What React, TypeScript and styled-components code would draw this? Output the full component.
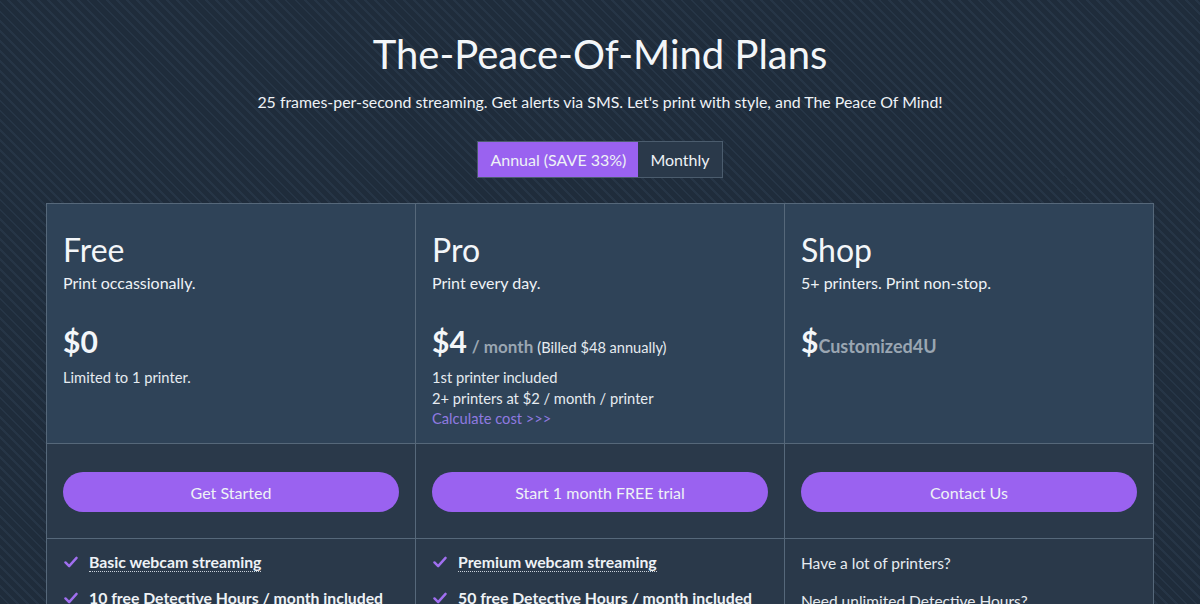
import React from "react";
import styled, { createGlobalStyle } from "styled-components";

const Global = createGlobalStyle`
  html, body { margin: 0; padding: 0; }
  body {
    font-family: Lato, "Open Sans", sans-serif;
    color: #eef2f6;
    background-color: #1f2c3b;
    background-image: repeating-linear-gradient(
      45deg,
      #1f2c3b 0px,
      #1f2c3b 5px,
      #263546 5px,
      #263546 7px
    );
    height: 604px;
    overflow: hidden;
  }
`;

const Page = styled.div`
  display: flex;
  flex-direction: column;
  align-items: center;
  padding-top: 28px;
`;

const Title = styled.h1`
  margin: 0;
  font-size: 40px;
  font-weight: 400;
  line-height: 52px;
  color: #f3f6f9;
`;

const Subtitle = styled.p`
  margin: 12px 0 0;
  font-size: 15.9px;
  line-height: 20px;
  color: #eef2f6;
`;

const Toggle = styled.div`
  display: flex;
  margin-top: 29px;
  border: 1px solid #4b5c6d;
`;

const ToggleBtn = styled.div<{ $active?: boolean }>`
  height: 35px;
  display: flex;
  align-items: center;
  padding: 0 12px;
  font-size: 16px;
  color: #eef2f6;
  background: ${(p) => (p.$active ? "#9a62f0" : "#2a394a")};
`;

const Table = styled.div`
  margin-top: 25px;
  width: 1107px;
  border-top: 1px solid #56687a;
  border-left: 1px solid #56687a;
`;

const Row = styled.div<{ $bg: string; $h?: number }>`
  display: grid;
  grid-template-columns: repeat(3, 1fr);
  background: ${(p) => p.$bg};
  ${(p) => (p.$h ? `height: ${p.$h}px;` : "")}
`;

const Cell = styled.div<{ $pt?: number }>`
  border-right: 1px solid #56687a;
  border-bottom: 1px solid #56687a;
  padding: ${(p) => p.$pt ?? 0}px 16px 0 16px;
  box-sizing: border-box;
  display: flex;
  flex-direction: column;
`;

const PlanName = styled.div`
  font-size: 32px;
  line-height: 38px;
  font-weight: 400;
  color: #f3f6f9;
`;

const Tagline = styled.div`
  margin-top: 4px;
  font-size: 16px;
  line-height: 20px;
  color: #eef2f6;
`;

const PriceLine = styled.div`
  margin-top: 30px;
  display: flex;
  align-items: baseline;
  height: 36px;
`;

const Amount = styled.span`
  font-size: 30px;
  font-weight: 700;
  color: #f3f6f9;
`;

const Per = styled.span`
  font-size: 17px;
  font-weight: 700;
  color: #9aa6b2;
  margin-left: 5px;
`;

const Billed = styled.span`
  font-size: 14.6px;
  color: #e6ebf0;
  margin-left: 4px;
`;

const Custom = styled.span`
  font-size: 18px;
  font-weight: 700;
  color: #9aa6b2;
`;

const Notes = styled.div`
  margin-top: 8px;
  font-size: 14.7px;
  line-height: 20.5px;
  color: #e6ebf0;
`;

const CalcLink = styled.a`
  color: #8f7ae0;
  text-decoration: none;
  display: block;
`;

const Button = styled.button`
  height: 40px;
  width: 100%;
  border: none;
  border-radius: 20px;
  background: #9a62f0;
  color: #eef2f6;
  font-family: Lato, sans-serif;
  font-size: 16px;
  cursor: pointer;
`;

const FeatureList = styled.ul`
  list-style: none;
  margin: 0;
  padding: 0;
`;

const Feature = styled.li`
  display: flex;
  align-items: center;
  gap: 11px;
  height: 36px;
  padding-left: 1px;
`;

const FeatureText = styled.span`
  font-size: 15.8px;
  font-weight: 700;
  color: #eef2f6;
  border-bottom: 1px dotted #c9d1da;
  line-height: 18px;
`;

const Plain = styled.div`
  font-size: 15.5px;
  color: #e6ebf0;
  height: 38px;
  display: flex;
  align-items: center;
`;

const Check = () => (
  <svg width="14" height="12" viewBox="0 0 15 13">
    <path d="M1.5 7 L5.5 11 L13.5 2" fill="none" stroke="#a06ff0" strokeWidth="2.6" strokeLinecap="round" strokeLinejoin="round" />
  </svg>
);

export default function App() {
  return (
    <>
      <Global />
      <Page>
        <Title>The-Peace-Of-Mind Plans</Title>
        <Subtitle>25 frames-per-second streaming. Get alerts via SMS. Let's print with style, and The Peace Of Mind!</Subtitle>
        <Toggle>
          <ToggleBtn $active>Annual (SAVE 33%)</ToggleBtn>
          <ToggleBtn>Monthly</ToggleBtn>
        </Toggle>
        <Table>
          <Row $bg="#2f4358" $h={240}>
            <Cell $pt={27}>
              <PlanName>Free</PlanName>
              <Tagline>Print occassionally.</Tagline>
              <PriceLine>
                <Amount>$0</Amount>
              </PriceLine>
              <Notes>Limited to 1 printer.</Notes>
            </Cell>
            <Cell $pt={27}>
              <PlanName>Pro</PlanName>
              <Tagline>Print every day.</Tagline>
              <PriceLine>
                <Amount>$4</Amount>
                <Per>/ month</Per>
                <Billed>(Billed $48 annually)</Billed>
              </PriceLine>
              <Notes>
                1st printer included
                <br />
                2+ printers at $2 / month / printer
                <CalcLink href="#">Calculate cost &gt;&gt;&gt;</CalcLink>
              </Notes>
            </Cell>
            <Cell $pt={27}>
              <PlanName>Shop</PlanName>
              <Tagline>5+ printers. Print non-stop.</Tagline>
              <PriceLine>
                <Amount>$</Amount>
                <Custom>Customized4U</Custom>
              </PriceLine>
            </Cell>
          </Row>
          <Row $bg="#2a394a" $h={95}>
            <Cell $pt={28}>
              <Button>Get Started</Button>
            </Cell>
            <Cell $pt={28}>
              <Button>Start 1 month FREE trial</Button>
            </Cell>
            <Cell $pt={28}>
              <Button>Contact Us</Button>
            </Cell>
          </Row>
          <Row $bg="#2a394a" $h={120}>
            <Cell $pt={5}>
              <FeatureList>
                <Feature><Check /><FeatureText>Basic webcam streaming</FeatureText></Feature>
                <Feature><Check /><FeatureText>10 free Detective Hours / month included</FeatureText></Feature>
              </FeatureList>
            </Cell>
            <Cell $pt={5}>
              <FeatureList>
                <Feature><Check /><FeatureText>Premium webcam streaming</FeatureText></Feature>
                <Feature><Check /><FeatureText>50 free Detective Hours / month included</FeatureText></Feature>
              </FeatureList>
            </Cell>
            <Cell $pt={5}>
              <Plain>Have a lot of printers?</Plain>
              <Plain>Need unlimited Detective Hours?</Plain>
            </Cell>
          </Row>
        </Table>
      </Page>
    </>
  );
}
